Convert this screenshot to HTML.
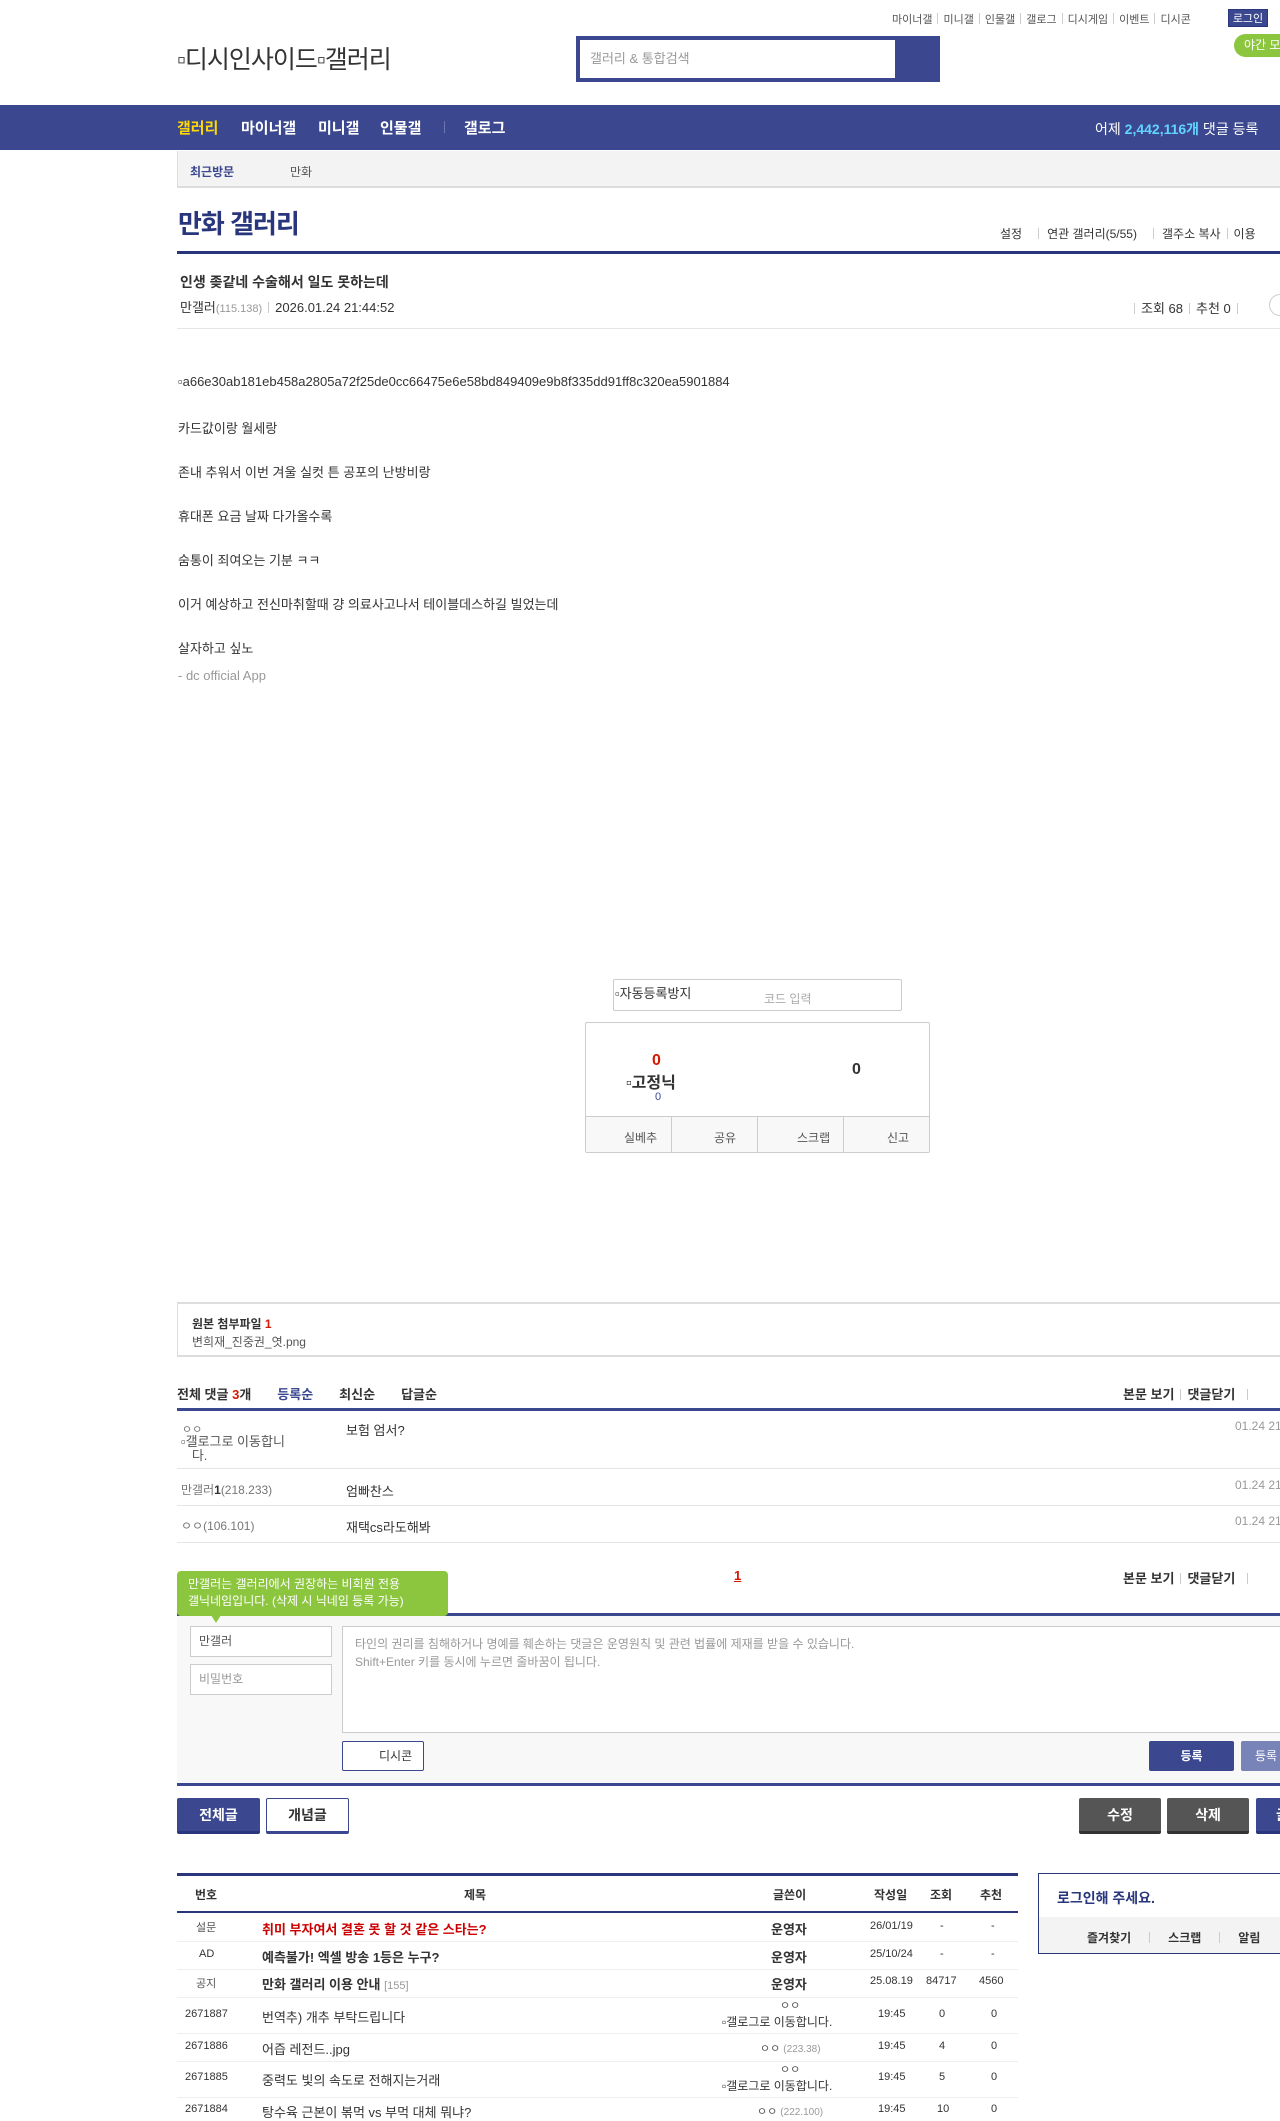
<!DOCTYPE html>
<html><head><meta charset="utf-8">
<style>
*{margin:0;padding:0;box-sizing:border-box}
body{width:1280px;height:2120px;position:relative;overflow:hidden;background:#fff;font-family:"Liberation Sans","Noto Sans CJK KR",sans-serif;font-size:13px;color:#333}
.a{position:absolute;white-space:nowrap}
.bl{color:#3b4890}
.sep{display:inline-block;width:1px;height:11px;background:#ccc;margin:0 6px;vertical-align:-1px}
.nv{position:absolute;top:117px;font-size:15px;font-weight:bold;color:#fff;white-space:nowrap}
</style></head><body>
<!-- top links -->
<div class="a" style="left:892px;top:11px;font-size:11px;color:#555">마이너갤<span class="sep" style="margin:0 5px"></span>미니갤<span class="sep" style="margin:0 5px"></span>인물갤<span class="sep" style="margin:0 5px"></span>갤로그<span class="sep" style="margin:0 5px"></span>디시게임<span class="sep" style="margin:0 5px"></span>이벤트<span class="sep" style="margin:0 5px"></span>디시콘</div>
<div class="a" style="left:1228px;top:9px;width:40px;height:18px;background:#3b4890;color:#fff;font-size:11px;text-align:center;line-height:18px;border:1px solid #29367c">로그인</div>
<div class="a" style="left:1234px;top:34px;width:60px;height:23px;background:#8cc63f;border-radius:12px 0 0 12px;color:#fff;font-size:12px;line-height:23px;padding-left:10px">야간 모드</div>
<!-- logo -->
<div class="a" style="left:177px;top:40px;font-size:25px;color:#333;letter-spacing:-1px">▫디시인사이드▫갤러리</div>
<!-- search -->
<div class="a" style="left:576px;top:36px;width:364px;height:46px;background:#3b4890"></div>
<div class="a" style="left:580px;top:40px;width:315px;height:38px;background:#fff;color:#999;font-size:13px;line-height:38px;padding-left:10px">갤러리 &amp; 통합검색</div>
<!-- nav -->
<div class="a" style="left:0;top:105px;width:1280px;height:45px;background:#3b4890"></div>
<div class="nv" style="left:177px;color:#ffd800">갤러리</div>
<div class="nv" style="left:241px">마이너갤</div>
<div class="nv" style="left:318px">미니갤</div>
<div class="nv" style="left:380px">인물갤</div>
<div class="a" style="left:444px;top:121px;width:1px;height:12px;background:#6e78b0"></div>
<div class="nv" style="left:464px">갤로그</div>
<div class="a" style="left:1095px;top:119px;font-size:14px;color:#fff">어제 <b style="color:#61d4ff">2,442,116개</b> 댓글 등록</div>
<!-- sub bar -->
<div class="a" style="left:177px;top:151px;width:1103px;height:37px;background:#f3f3f3;border-left:1px solid #ddd;border-bottom:2px solid #ddd"></div>
<div class="a bl" style="left:190px;top:163px;font-size:12px;font-weight:bold">최근방문</div>
<div class="a" style="left:290px;top:163px;font-size:12px;color:#555">만화</div>
<!-- title -->
<div class="a" style="left:178px;top:204px;font-size:26px;font-weight:bold;letter-spacing:-1px;color:#29367c">만화 갤러리</div>
<div class="a" style="left:1000px;top:225px;font-size:12px;color:#333">설정<span class="sep" style="margin:0 8px 0 16px"></span>연관 갤러리(5/55)<span class="sep" style="margin:0 8px 0 16px"></span>갤주소 복사<span class="sep"></span>이용</div>
<div class="a" style="left:177px;top:251px;width:1103px;height:3px;background:#29367c"></div>
<!-- post head -->
<div class="a" style="left:180px;top:272px;font-size:14px;font-weight:bold;color:#333">인생 좆같네 수술해서 일도 못하는데</div>
<div class="a" style="left:180px;top:297px;font-size:13px;color:#333">만갤러<span style="font-size:11px;color:#999">(115.138)</span><span class="sep"></span>2026.01.24 21:44:52</div>
<div class="a" style="left:1128px;top:298px;font-size:13px;color:#333"><span class="sep"></span>조회 68<span class="sep"></span>추천 0<span class="sep"></span></div>
<div class="a" style="left:1269px;top:294px;width:22px;height:22px;border:1px solid #ccc;border-radius:11px"></div>
<div class="a" style="left:177px;top:328px;width:1103px;height:1px;background:#e5e5e5"></div>
<!-- body -->
<div class="a" style="left:178px;top:374px;font-size:13px;color:#333">▫a66e30ab181eb458a2805a72f25de0cc66475e6e58bd849409e9b8f335dd91ff8c320ea5901884</div>
<div class="a" style="left:178px;top:418px;color:#333">카드값이랑 월세랑</div>
<div class="a" style="left:178px;top:462px;color:#333">존내 추워서 이번 겨울 실컷 튼 공포의 난방비랑</div>
<div class="a" style="left:178px;top:506px;color:#333">휴대폰 요금 날짜 다가올수록</div>
<div class="a" style="left:178px;top:550px;color:#333">숨통이 죄여오는 기분 ㅋㅋ</div>
<div class="a" style="left:178px;top:594px;color:#333">이거 예상하고 전신마취할때 걍 의료사고나서 테이블데스하길 빌었는데</div>
<div class="a" style="left:178px;top:638px;color:#333">살자하고 싶노</div>
<div class="a" style="left:178px;top:668px;color:#999">- dc official App</div>
<!-- captcha -->
<div class="a" style="left:613px;top:979px;width:289px;height:32px;border:1px solid #ccc;border-radius:2px"></div>
<div class="a" style="left:615px;top:983px;font-size:13px;color:#333">▫자동등록방지</div>
<div class="a" style="left:764px;top:990px;font-size:12px;color:#aaa">코드 입력</div>
<!-- recommend -->
<div class="a" style="left:585px;top:1022px;width:345px;height:131px;border:1px solid #ccc;border-radius:2px"></div>
<div class="a" style="left:652px;top:1052px;font-size:16px;font-weight:bold;color:#d31900">0</div>
<div class="a" style="left:626px;top:1069px;font-size:16px;font-weight:bold;color:#333">▫고정닉</div>
<div class="a" style="left:655px;top:1091px;font-size:11px;color:#3b4890">0</div>
<div class="a" style="left:852px;top:1061px;font-size:16px;font-weight:bold;color:#333">0</div>
<div class="a" style="left:586px;top:1116px;width:343px;height:36px;background:#f8f8f8;border-top:1px solid #ccc"></div>
<div class="a" style="left:671px;top:1116px;width:1px;height:36px;background:#ccc"></div>
<div class="a" style="left:757px;top:1116px;width:1px;height:36px;background:#ccc"></div>
<div class="a" style="left:843px;top:1116px;width:1px;height:36px;background:#ccc"></div>
<div class="a" style="left:624px;top:1129px;font-size:12px;color:#555">실베추</div>
<div class="a" style="left:714px;top:1129px;font-size:12px;color:#555">공유</div>
<div class="a" style="left:797px;top:1129px;font-size:12px;color:#555">스크랩</div>
<div class="a" style="left:887px;top:1129px;font-size:12px;color:#555">신고</div>
<!-- attachment -->
<div class="a" style="left:177px;top:1302px;width:1110px;height:55px;border:1px solid #ddd;border-width:2px 0 2px 1px"></div>
<div class="a" style="left:192px;top:1315px;font-size:12px;font-weight:bold;color:#333">원본 첨부파일 <span style="color:#d31900">1</span></div>
<div class="a" style="left:192px;top:1333px;font-size:12px;color:#555">변희재_진중권_엿.png</div>
<!-- comments -->
<div class="a" style="left:177px;top:1384px;font-size:13px;font-weight:bold;color:#333">전체 댓글 <span style="color:#d31900">3</span>개<span class="bl" style="margin-left:26px">등록순</span><span style="margin-left:26px">최신순</span><span style="margin-left:26px">답글순</span></div>
<div class="a" style="left:1123px;top:1384px;font-size:13px;font-weight:bold;color:#333">본문 보기<span class="sep"></span>댓글닫기<span class="sep" style="margin-left:12px"></span></div>
<div class="a" style="left:177px;top:1408px;width:1103px;height:3px;background:#3b4890"></div>
<div class="a" style="left:182px;top:1421px;font-size:11px;color:#777">ㅇㅇ</div>
<div class="a" style="left:181px;top:1435px;font-size:13px;color:#555;line-height:14px;white-space:normal;width:130px">▫갤로그로 이동합니<br>&nbsp;&nbsp;&nbsp;다.</div>
<div class="a" style="left:346px;top:1420px;color:#333">보험 엄서?</div>
<div class="a" style="left:1235px;top:1419px;font-size:12px;color:#999">01.24 21</div>
<div class="a" style="left:177px;top:1468px;width:1103px;height:1px;background:#e5e5e5"></div>
<div class="a" style="left:181px;top:1481px;font-size:12px;color:#777">만갤러<b style="color:#333">1</b>(218.233)</div>
<div class="a" style="left:346px;top:1481px;color:#333">엄빠찬스</div>
<div class="a" style="left:1235px;top:1478px;font-size:12px;color:#999">01.24 21</div>
<div class="a" style="left:177px;top:1505px;width:1103px;height:1px;background:#e5e5e5"></div>
<div class="a" style="left:181px;top:1517px;font-size:12px;color:#777">ㅇㅇ(106.101)</div>
<div class="a" style="left:346px;top:1517px;color:#333">재택cs라도해봐</div>
<div class="a" style="left:1235px;top:1514px;font-size:12px;color:#999">01.24 21</div>
<div class="a" style="left:177px;top:1542px;width:1103px;height:1px;background:#e5e5e5"></div>
<div class="a" style="left:734px;top:1568px;font-size:13px;font-weight:bold;color:#d31900;text-decoration:underline">1</div>
<div class="a" style="left:1123px;top:1568px;font-size:13px;font-weight:bold;color:#333">본문 보기<span class="sep"></span>댓글닫기<span class="sep" style="margin-left:12px"></span></div>
<div class="a" style="left:177px;top:1613px;width:1103px;height:3px;background:#3b4890"></div>
<!-- write area -->
<div class="a" style="left:177px;top:1616px;width:1103px;height:168px;background:#f8f8f8"></div>
<div class="a" style="left:177px;top:1571px;width:271px;height:45px;background:#8cc63f;border-radius:4px;color:#fff;font-size:12px;line-height:17px;padding:5px 11px;white-space:normal">만갤러는 갤러리에서 권장하는 비회원 전용<br>갤닉네임입니다. (삭제 시 닉네임 등록 가능)</div>
<div class="a" style="left:211px;top:1615px;width:0;height:0;border-left:5px solid transparent;border-right:5px solid transparent;border-top:8px solid #8cc63f"></div>
<div class="a" style="left:190px;top:1626px;width:142px;height:31px;background:#fff;border:1px solid #ccc;font-size:12px;color:#555;line-height:29px;padding-left:8px">만갤러</div>
<div class="a" style="left:190px;top:1664px;width:142px;height:31px;background:#fff;border:1px solid #ccc;font-size:12px;color:#999;line-height:29px;padding-left:8px">비밀번호</div>
<div class="a" style="left:342px;top:1626px;width:950px;height:107px;background:#fff;border:1px solid #ccc;font-size:12px;color:#999;line-height:18px;padding:8px 12px;white-space:normal">타인의 권리를 침해하거나 명예를 훼손하는 댓글은 운영원칙 및 관련 법률에 제재를 받을 수 있습니다.<br>Shift+Enter 키를 동시에 누르면 줄바꿈이 됩니다.</div>
<div class="a" style="left:342px;top:1741px;width:82px;height:30px;background:#fff;border:1px solid #3b4890;border-radius:2px;font-size:12px;color:#333;line-height:28px;padding-left:36px">디시콘</div>
<div class="a" style="left:1149px;top:1741px;width:85px;height:30px;background:#3b4890;border-radius:2px;color:#fff;font-size:12px;line-height:30px;text-align:center;font-weight:bold">등록</div>
<div class="a" style="left:1241px;top:1741px;width:60px;height:30px;background:#7883b8;border-radius:2px;color:#fff;font-size:12px;line-height:30px;padding-left:14px">등록</div>
<div class="a" style="left:177px;top:1783px;width:1103px;height:3px;background:#3b4890"></div>
<!-- buttons -->
<div class="a" style="left:177px;top:1798px;width:83px;height:36px;background:#3b4890;border-bottom:3px solid #29367c;border-radius:2px;color:#fff;font-size:14px;font-weight:bold;text-align:center;line-height:34px">전체글</div>
<div class="a" style="left:266px;top:1798px;width:83px;height:36px;background:#fff;border:1px solid #3b4890;border-bottom:3px solid #3b4890;border-radius:2px;color:#333;font-size:14px;font-weight:bold;text-align:center;line-height:32px">개념글</div>
<div class="a" style="left:1079px;top:1798px;width:82px;height:36px;background:#555;border-bottom:3px solid #333;border-radius:2px;color:#fff;font-size:14px;font-weight:bold;text-align:center;line-height:34px">수정</div>
<div class="a" style="left:1167px;top:1798px;width:82px;height:36px;background:#555;border-bottom:3px solid #333;border-radius:2px;color:#fff;font-size:14px;font-weight:bold;text-align:center;line-height:34px">삭제</div>
<div class="a" style="left:1256px;top:1798px;width:40px;height:36px;background:#3b4890;border-bottom:3px solid #29367c;border-radius:2px;color:#fff;font-size:14px;font-weight:bold;line-height:34px;padding-left:20px">글</div>
<!-- list -->
<div class="a" style="left:177px;top:1873px;width:841px;height:3px;background:#29367c"></div>
<div class="a" style="left:177px;top:1911px;width:841px;height:2px;background:#29367c"></div>
<div class="a" style="left:195px;top:1886px;font-size:12px;font-weight:bold;color:#333">번호</div>
<div class="a" style="left:464px;top:1886px;font-size:12px;font-weight:bold;color:#333">제목</div>
<div class="a" style="left:773px;top:1886px;font-size:12px;font-weight:bold;color:#333">글쓴이</div>
<div class="a" style="left:874px;top:1886px;font-size:12px;font-weight:bold;color:#333">작성일</div>
<div class="a" style="left:930px;top:1886px;font-size:12px;font-weight:bold;color:#333">조회</div>
<div class="a" style="left:980px;top:1886px;font-size:12px;font-weight:bold;color:#333">추천</div>

<div class="a" style="left:196px;top:1919px;font-size:11px;color:#555">설문</div>
<div class="a" style="left:262px;top:1919px;font-size:13px;font-weight:bold;color:#c00">취미 부자여서 결혼 못 할 것 같은 스타는?</div>
<div class="a" style="left:771px;top:1919px;font-size:13px;font-weight:bold;color:#333">운영자</div>
<div class="a" style="left:870px;top:1920px;font-size:11px;color:#333">26/01/19</div>
<div class="a" style="left:940px;top:1920px;font-size:11px;color:#333">-</div>
<div class="a" style="left:991px;top:1920px;font-size:11px;color:#333">-</div>
<div class="a" style="left:177px;top:1941px;width:841px;height:1px;background:#eee"></div>
<div class="a" style="left:199px;top:1948px;font-size:11px;color:#333">AD</div>
<div class="a" style="left:262px;top:1947px;font-size:13px;font-weight:bold;color:#333">예측불가! 엑셀 방송 1등은 누구?</div>
<div class="a" style="left:771px;top:1947px;font-size:13px;font-weight:bold;color:#333">운영자</div>
<div class="a" style="left:870px;top:1948px;font-size:11px;color:#333">25/10/24</div>
<div class="a" style="left:940px;top:1948px;font-size:11px;color:#333">-</div>
<div class="a" style="left:991px;top:1948px;font-size:11px;color:#333">-</div>
<div class="a" style="left:177px;top:1969px;width:841px;height:1px;background:#eee"></div>
<div class="a" style="left:196px;top:1975px;font-size:11px;color:#555">공지</div>
<div class="a" style="left:262px;top:1974px;font-size:13px;font-weight:bold;color:#333">만화 갤러리 이용 안내 <span style="font-weight:normal;font-size:11px;color:#999">[155]</span></div>
<div class="a" style="left:771px;top:1974px;font-size:13px;font-weight:bold;color:#333">운영자</div>
<div class="a" style="left:870px;top:1975px;font-size:11px;color:#333">25.08.19</div>
<div class="a" style="left:926px;top:1975px;font-size:11px;color:#333">84717</div>
<div class="a" style="left:979px;top:1975px;font-size:11px;color:#333">4560</div>
<div class="a" style="left:177px;top:1997px;width:841px;height:1px;background:#eee"></div>
<div class="a" style="left:185px;top:2008px;font-size:11px;color:#333">2671887</div>
<div class="a" style="left:262px;top:2007px;font-size:13px;color:#333">번역추) 개추 부탁드립니다</div>
<div class="a" style="left:780px;top:1997px;font-size:11px;color:#555">ㅇㅇ</div>
<div class="a" style="left:722px;top:2013px;font-size:12px;color:#333">▫갤로그로 이동합니다.</div>
<div class="a" style="left:878px;top:2008px;font-size:11px;color:#333">19:45</div>
<div class="a" style="left:939px;top:2008px;font-size:11px;color:#333">0</div>
<div class="a" style="left:991px;top:2008px;font-size:11px;color:#333">0</div>
<div class="a" style="left:177px;top:2033px;width:841px;height:1px;background:#eee"></div>
<div class="a" style="left:185px;top:2040px;font-size:11px;color:#333">2671886</div>
<div class="a" style="left:262px;top:2039px;font-size:13px;color:#333">어즙 레전드..jpg</div>
<div class="a" style="left:760px;top:2040px;font-size:11px;color:#555">ㅇㅇ <span style="font-size:10px;color:#999">(223.38)</span></div>
<div class="a" style="left:878px;top:2040px;font-size:11px;color:#333">19:45</div>
<div class="a" style="left:939px;top:2040px;font-size:11px;color:#333">4</div>
<div class="a" style="left:991px;top:2040px;font-size:11px;color:#333">0</div>
<div class="a" style="left:177px;top:2061px;width:841px;height:1px;background:#eee"></div>
<div class="a" style="left:185px;top:2071px;font-size:11px;color:#333">2671885</div>
<div class="a" style="left:262px;top:2070px;font-size:13px;color:#333">중력도 빛의 속도로 전해지는거래</div>
<div class="a" style="left:780px;top:2061px;font-size:11px;color:#555">ㅇㅇ</div>
<div class="a" style="left:722px;top:2077px;font-size:12px;color:#333">▫갤로그로 이동합니다.</div>
<div class="a" style="left:878px;top:2071px;font-size:11px;color:#333">19:45</div>
<div class="a" style="left:939px;top:2071px;font-size:11px;color:#333">5</div>
<div class="a" style="left:991px;top:2071px;font-size:11px;color:#333">0</div>
<div class="a" style="left:177px;top:2097px;width:841px;height:1px;background:#eee"></div>
<div class="a" style="left:185px;top:2103px;font-size:11px;color:#333">2671884</div>
<div class="a" style="left:262px;top:2102px;font-size:13px;color:#333">탕수육 근본이 볶먹 vs 부먹 대체 뭐냐?</div>
<div class="a" style="left:757px;top:2103px;font-size:11px;color:#555">ㅇㅇ <span style="font-size:10px;color:#999">(222.100)</span></div>
<div class="a" style="left:878px;top:2103px;font-size:11px;color:#333">19:45</div>
<div class="a" style="left:937px;top:2103px;font-size:11px;color:#333">10</div>
<div class="a" style="left:991px;top:2103px;font-size:11px;color:#333">0</div>
<!-- login box -->
<div class="a" style="left:1038px;top:1873px;width:260px;height:81px;border:1px solid #29367c;background:#fff"></div>
<div class="a" style="left:1039px;top:1917px;width:260px;height:36px;background:#f3f3f3"></div>
<div class="a" style="left:1057px;top:1888px;font-size:14px;font-weight:bold;color:#29367c">로그인해 주세요.</div>
<div class="a" style="left:1087px;top:1929px;font-size:12px;font-weight:bold;color:#333">즐겨찾기<span class="sep" style="margin:0 18px"></span>스크랩<span class="sep" style="margin:0 18px"></span>알림</div>
</body></html>
